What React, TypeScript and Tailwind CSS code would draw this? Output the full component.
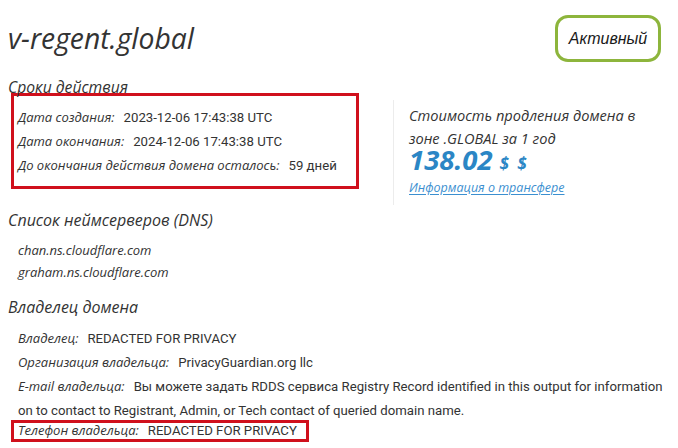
import React from "react";

const head = "font-['Open_Sans',sans-serif] italic text-[#333]";
const lab = "font-['Open_Sans',sans-serif] italic text-[13px] text-[#333]";
const val = "font-['Roboto',sans-serif] text-[13.2px] text-[#333]";

function Row({ label, value }: { label: string; value: React.ReactNode }) {
  return (
    <div className="leading-[23px] whitespace-nowrap">
      <span className={lab}>{label}</span>
      <span className={val + " ml-[9px]"}>{value}</span>
    </div>
  );
}

export default function App() {
  return (
    <div className="w-[678px] h-[448px] bg-white overflow-hidden pl-[8px] relative">
      <div className="flex items-center justify-between h-[47px] mt-[15px] pr-[17px]">
        <div className={head + " text-[28.3px] font-medium leading-[32px] -mt-[1px]"}>v-regent.global</div>
        <div className="w-[106px] h-[47px] border-[3px] border-[#8db53c] rounded-[13px] flex items-center justify-center">
          <span className="font-['Liberation_Sans',sans-serif] italic text-[16px] text-[#1a1a1a]">Активный</span>
        </div>
      </div>

      <div className="flex items-start">
        <div className="w-[385px]">
          <div className={head + " text-[15.7px] font-medium leading-[20px] mt-[15px]"}>Сроки действия</div>
          <div className="ml-[3px] -mt-[4px] w-[348px] border-[3px] border-[#d0101c] pl-[4px] pt-[9px] pb-[9px]">
            <Row label="Дата создания:" value="2023-12-06 17:43:38 UTC" />
            <Row label="Дата окончания:" value="2024-12-06 17:43:38 UTC" />
            <Row label="До окончания действия домена осталось:" value="59 дней" />
          </div>
        </div>
        <div className="mt-[38px] border-l border-[#ececec] pl-[15px] pt-[3.5px] h-[105px]">
          <div className={head + " text-[14.6px] font-medium leading-[23px] whitespace-nowrap"}>
            <div>Стоимость продления домена в</div>
            <div>зоне .GLOBAL за 1 год</div>
          </div>
          <div className="flex items-baseline -mt-[4.5px]">
            <span className="font-['Open_Sans',sans-serif] italic font-bold text-[27.5px] leading-[30px] text-[#2b86c5]">138.02</span>
            <span className="font-['Open_Sans',sans-serif] italic font-bold text-[17px] text-[#2b86c5] ml-[7px] tracking-[2px]">$ $</span>
          </div>
          <div className="mt-[1px] font-['Open_Sans',sans-serif] italic text-[12.5px] leading-[20px] text-[#3b8fd0] underline underline-offset-2">
            Информация о трансфере
          </div>
        </div>
      </div>

      <div className={head + " text-[16px] font-medium leading-[20px] mt-[5px]"}>Список неймсерверов (DNS)</div>
      <div className="mt-[9px] pl-[10px]">
        <div className={head + " text-[13px] leading-[22px]"}>chan.ns.cloudflare.com</div>
        <div className={head + " text-[13px] leading-[22px]"}>graham.ns.cloudflare.com</div>
      </div>

      <div className={head + " text-[16px] font-medium leading-[20px] mt-[14px]"}>Владелец домена</div>
      <div className="mt-[9px] pl-[10px]">
        <Row label="Владелец:" value="REDACTED FOR PRIVACY" />
        <Row label="Организация владельца:" value="PrivacyGuardian.org llc" />
        <div className="leading-[23px] whitespace-nowrap">
          <span className={lab}>E-mail владельца:</span>
          <span className={val + " ml-[9px]"}>
            Вы можете задать RDDS сервиса Registry Record identified in this output for information
            <br />
            on to contact to Registrant, Admin, or Tech contact of queried domain name.
          </span>
        </div>
        <div className="h-[23px] flex items-center -ml-[7px] -mt-[3px]">
          <div className="border-[3px] border-[#d0101c] pl-[4px] pr-[9px] h-[22px] flex items-center whitespace-nowrap">
            <span className={lab}>Телефон владельца:</span>
            <span className={val + " ml-[9px]"}>REDACTED FOR PRIVACY</span>
          </div>
        </div>
      </div>
    </div>
  );
}
